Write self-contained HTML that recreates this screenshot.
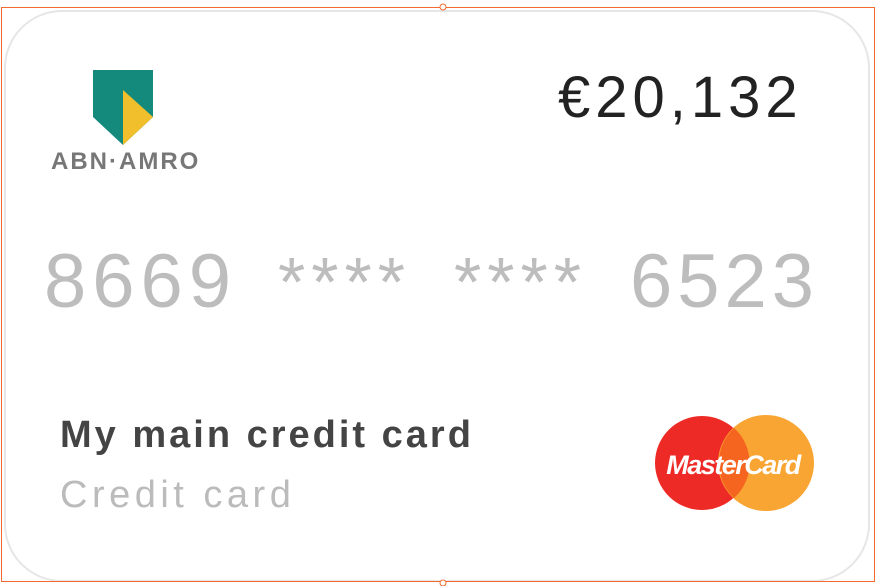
<!DOCTYPE html>
<html><head><style>
body{margin:0;width:878px;height:586px;background:#fff;position:relative;overflow:hidden;font-family:"Liberation Sans",sans-serif}
.sel{position:absolute;left:1px;top:7px;width:874px;height:575px;border:1.5px solid #f26a2e;box-sizing:border-box}
.card{position:absolute;left:4px;top:10px;width:866px;height:572px;border:2px solid #e6e6e6;border-radius:58px;box-sizing:border-box;background:#fff}
.t{position:absolute;white-space:nowrap}
</style></head><body>
<div class="card"></div>
<div class="sel"></div>
<svg style="position:absolute;left:0;top:0" width="878" height="586">
<polygon points="93,70 153,70 153,117 123,145 93,117" fill="#148a7d"/>
<polygon points="123,90 153,117 123,145" fill="#f1bf2b"/>
<circle cx="702" cy="463" r="47" fill="#ee2a27"/>
<circle cx="766" cy="463" r="48" fill="#f9a533"/>
<path d="M734,428 A47,47 0 0 1 734,498 A48,48 0 0 1 734,428Z" fill="#f6651f"/>
<text x="733" y="474" text-anchor="middle" font-family="Liberation Sans" font-style="italic" font-weight="bold" font-size="27" fill="#fff" letter-spacing="-1.5">MasterCard</text>
<circle cx="443" cy="7" r="3" fill="#fff" stroke="#f26a2e"/>
<circle cx="443" cy="583" r="3" fill="#fff" stroke="#f26a2e"/>
</svg>
<div class="t" style="left:51px;top:148px;font-size:24px;font-weight:bold;color:#777;letter-spacing:2px">ABN·AMRO</div>
<div class="t" style="left:558px;top:64px;font-size:58px;color:#222;letter-spacing:5px">€20,132</div>
<div class="t" style="left:44px;top:238px;font-size:76px;color:#bdbdbd;letter-spacing:6px">8669</div>
<div class="t" style="left:278px;top:242px;font-size:70px;color:#bdbdbd;letter-spacing:6px">****</div>
<div class="t" style="left:454px;top:242px;font-size:70px;color:#bdbdbd;letter-spacing:6px">****</div>
<div class="t" style="left:630px;top:238px;font-size:76px;color:#bdbdbd;letter-spacing:5px">6523</div>
<div class="t" style="left:60px;top:414px;font-size:38px;font-weight:bold;color:#444;letter-spacing:3px">My main credit card</div>
<div class="t" style="left:60px;top:474px;font-size:38px;color:#bbb;letter-spacing:4.5px">Credit card</div>
</body></html>
